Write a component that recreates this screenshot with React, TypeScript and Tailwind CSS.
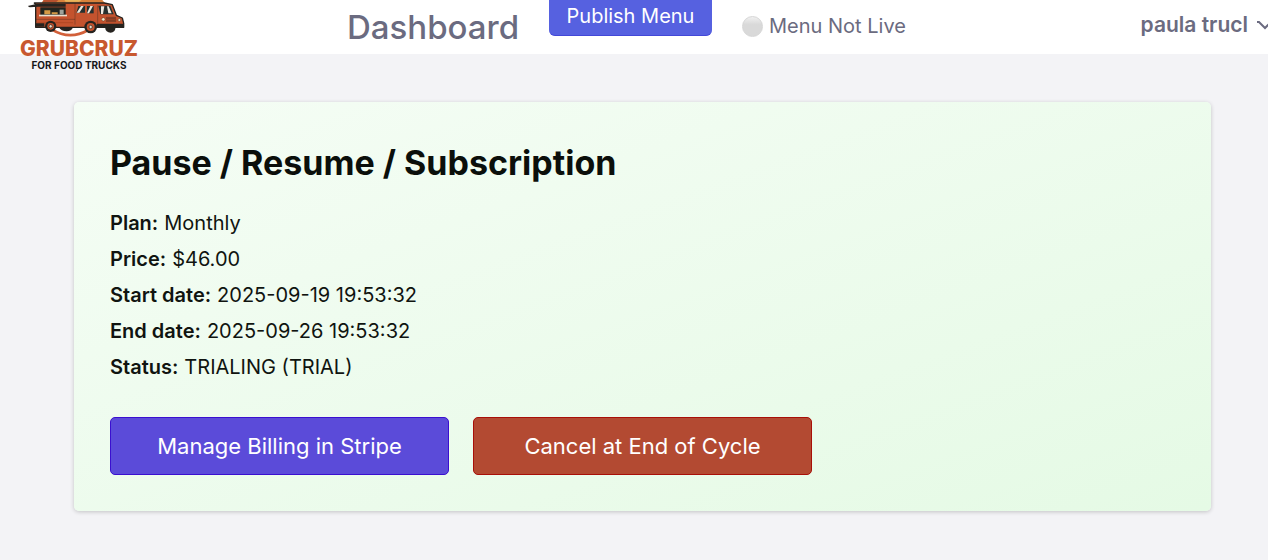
import React from 'react';
import clsx from 'clsx';

const details = [
  { label: 'Plan', value: 'Monthly' },
  { label: 'Price', value: '$46.00' },
  { label: 'Start date', value: '2025-09-19 19:53:32' },
  { label: 'End date', value: '2025-09-26 19:53:32' },
  { label: 'Status', value: 'TRIALING (TRIAL)' },
];

function TruckArt() {
  return (
    <svg viewBox="84 0 312 117" className="h-[39px] w-[104px]" aria-hidden="true">
      <path d="M158 88 Q212 122 268 90" fill="none" stroke="#d2603a" strokeWidth="8" />
      <path d="M134 0 H310 L318 9 H128 Z" fill="#d9823c" />
      <path d="M134 0 H178 L172 6 H130 Z" fill="#b7502e" />
      <path d="M196 0 H248 L240 5 H200 Z" fill="#e9b65c" />
      <path d="M106 9 H316 L340 14 L352 46 L370 54 L374 70 V82 H110 V14 Z" fill="#c4532e" stroke="#26231f" strokeWidth="4" strokeLinejoin="round" />
      <path d="M228 10 V74 M110 58 H228 M296 16 V70" stroke="#26231f" strokeWidth="1" fill="none" />
      <path d="M112 68 H222" stroke="#a8431f" strokeWidth="2" />
      <rect x="124" y="22" width="76" height="23" fill="#22251f" />
      <path d="M86 18 L112 12 H200 V20 H118 L92 22 Z" fill="#26231f" />
      <path d="M136 31 H154 V43 H136 Z M158 37 H176 V43 H158 Z" fill="#d69a45" />
      <path d="M182 29 H194 V43 H182 Z" fill="#9fa29a" />
      <rect x="120" y="44" width="84" height="5" fill="#e9dfce" />
      <path d="M238 18 H258 V38 H232 Z" fill="#26302f" />
      <path d="M246 18 H254 L241 38 H233 Z" fill="#eee9df" />
      <path d="M264 18 H284 V40 H264 Z" fill="#26302f" />
      <path d="M274 18 H282 L270 40 H264 Z" fill="#eee9df" />
      <path d="M298 17 H334 L344 43 H304 Z" fill="#26302f" />
      <path d="M306 19 H316 L312 42 H306 Z M324 19 H329 L338 40 H328 Z" fill="#eee9df" />
      <path d="M322 52 H350 V65 H322 Z" fill="#a74627" stroke="#26231f" strokeWidth="1" />
      <path d="M324 56 H348 M324 61 H348" stroke="#26231f" strokeWidth="1" />
      <circle cx="313" cy="58" r="5" fill="#f4e5c6" stroke="#26231f" strokeWidth="1" />
      <circle cx="361" cy="60" r="4" fill="#f4e5c6" stroke="#26231f" strokeWidth="1" />
      <path d="M294 71 H375 V82 H294 Z M108 70 H136 V80 H108 Z" fill="#26231f" />
      <path d="M180 82 H222 Q218 94 203 94 Q186 94 180 82 M318 82 H350 Q348 98 335 98 Q320 98 318 82" fill="#26231f" />
      <circle cx="155" cy="79" r="17" fill="#26231f" />
      <circle cx="155" cy="79" r="10" fill="#c4532e" />
      <circle cx="155" cy="79" r="5" fill="#e9dfce" stroke="#26231f" strokeWidth="2" />
      <circle cx="275" cy="81" r="19" fill="#26231f" />
      <circle cx="275" cy="81" r="12" fill="#c4532e" />
      <circle cx="275" cy="81" r="5" fill="#e9dfce" stroke="#26231f" strokeWidth="2" />
    </svg>
  );
}

function Logo() {
  return (
    <a href="#" className="flex w-[116px] shrink-0 flex-col items-center whitespace-nowrap">
      <TruckArt />
      <span className="text-[21px] leading-5 font-extrabold text-[#c8582f]">GRUBCRUZ</span>
      <span className="text-[10px] leading-3 font-bold text-[#16161a]">FOR FOOD TRUCKS</span>
    </a>
  );
}

function Header() {
  return (
    <header className="flex h-[54px] items-start bg-white pl-[21px] text-[#6b6b80]">
      <Logo />
      <h2 className="ml-[210px] w-[172px] shrink-0 text-[33px] leading-[54px] font-medium whitespace-nowrap">
        Dashboard
      </h2>
      <button
        type="button"
        className="ml-[30px] h-9 w-[163px] shrink-0 rounded-b-md border-b border-[#4348d8] bg-[#5661e0] pb-1 text-xl leading-8 whitespace-nowrap text-white"
      >
        Publish Menu
      </button>
      <div className="ml-[30px] flex items-center gap-[6px] text-xl leading-[53px] whitespace-nowrap">
        <span className="size-[21px] rounded-full border border-[#d6d6d6] bg-linear-to-b from-[#f0f0f0] to-[#d9d9d9] to-40%" />
        Menu Not Live
      </div>
      <button
        type="button"
        className="ml-auto flex shrink-0 items-center gap-2 text-[21px] leading-[49px] font-semibold whitespace-nowrap"
      >
        paula trucl
        <span className="flex w-3 overflow-hidden">
          <svg viewBox="0 0 16 10" className="h-[10px] w-4 shrink-0" fill="none" aria-hidden="true">
            <path d="M1 2 H3 L9 8 L15 2" stroke="currentColor" strokeWidth="2" />
          </svg>
        </span>
      </button>
    </header>
  );
}

type ActionButtonProps = { text: string; color: string };

function ActionButton({ text, color }: ActionButtonProps) {
  return (
    <button
      type="button"
      className={clsx('h-[58px] w-[339px] rounded-[5px] border text-[22px] whitespace-nowrap text-white', color)}
    >
      {text}
    </button>
  );
}

export default function App() {
  return (
    <div className="min-h-screen overflow-x-hidden bg-[#f3f3f6] font-['Inter',sans-serif]">
      <Header />
      <main className="pt-12 pr-[57px] pb-12 pl-[74px]">
        <section className="rounded-[5px] bg-linear-160 from-[#f5fdf5] to-[#e5fae5] px-9 pt-9 pb-9 shadow-[0_1px_4px_rgba(0,0,0,0.2)]">
          <h1 className="text-[34px] leading-[50px] font-bold text-[#0b0f0b]">Pause / Resume / Subscription</h1>
          <dl className="mt-[17px] text-xl leading-9 text-[#101410]">
            {details.map(({ label, value }) => (
              <div key={label} className="flex gap-[6px]">
                <dt className="font-semibold">{label}:</dt>
                <dd>{value}</dd>
              </div>
            ))}
          </dl>
          <div className="mt-8 flex flex-wrap gap-6">
            <ActionButton text="Manage Billing in Stripe" color="border-[#3a0fd0] bg-[#5b4bd9]" />
            <ActionButton text="Cancel at End of Cycle" color="border-[#a80f08] bg-[#b34a32]" />
          </div>
        </section>
      </main>
    </div>
  );
}
